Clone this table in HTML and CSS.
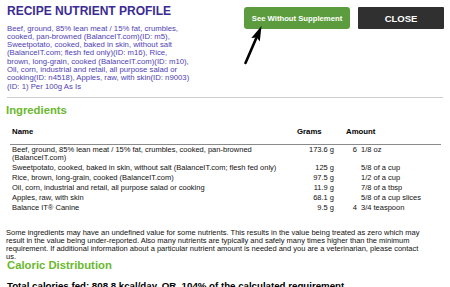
FILE: index.html
```html
<!DOCTYPE html>
<html lang="en">
<head>
<meta charset="utf-8">
<title>Recipe Nutrient Profile</title>
<link rel="stylesheet" href="styles.css">
</head>
<body>
<header class="top">
  <div class="intro">
    <h1 class="title">RECIPE NUTRIENT PROFILE</h1>
    <p class="recipe">Beef, ground, 85% lean meat / 15% fat, crumbles,<br>cooked, pan-browned (BalanceIT.com)(ID: m5),<br>Sweetpotato, cooked, baked in skin, without salt<br>(BalanceIT.com; flesh fed only)(ID: m16), Rice,<br>brown, long-grain, cooked (BalanceIT.com)(ID: m10),<br>Oil, corn, industrial and retail, all purpose salad or<br>cooking(ID: n4518), Apples, raw, with skin(ID: n9003)<br>(ID: 1) Per 100g As Is</p>
  </div>
  <div class="actions">
    <button class="btn btn-green" type="button">See Without Supplement</button>
    <button class="btn btn-dark" type="button">CLOSE</button>
  </div>
</header>
<hr class="rule">
<h2 class="section">Ingredients</h2>
<table class="ing">
  <colgroup><col class="c-name"><col class="c-grams"><col class="c-amt"></colgroup>
  <thead>
    <tr><th class="name">Name</th><th class="grams">Grams</th><th class="amt">Amount</th></tr>
  </thead>
  <tbody>
    <tr><td class="name">Beef, ground, 85% lean meat / 15% fat, crumbles, cooked, pan-browned (BalanceIT.com)</td><td class="grams">173.6 g</td><td class="amt"><span class="whole">6</span><span class="frac">1/8 oz</span></td></tr>
    <tr><td class="name">Sweetpotato, cooked, baked in skin, without salt (BalanceIT.com; flesh fed only)</td><td class="grams">125 g</td><td class="amt"><span class="whole"></span><span class="frac">5/8 of a cup</span></td></tr>
    <tr><td class="name">Rice, brown, long-grain, cooked (BalanceIT.com)</td><td class="grams">97.5 g</td><td class="amt"><span class="whole"></span><span class="frac">1/2 of a cup</span></td></tr>
    <tr><td class="name">Oil, corn, industrial and retail, all purpose salad or cooking</td><td class="grams">11.9 g</td><td class="amt"><span class="whole"></span><span class="frac">7/8 of a tbsp</span></td></tr>
    <tr><td class="name">Apples, raw, with skin</td><td class="grams">68.1 g</td><td class="amt"><span class="whole"></span><span class="frac">5/8 of a cup slices</span></td></tr>
    <tr><td class="name">Balance IT® Canine</td><td class="grams">9.5 g</td><td class="amt"><span class="whole">4</span><span class="frac">3/4 teaspoon</span></td></tr>
  </tbody>
</table>
<p class="note">Some ingredients may have an undefined value for some nutrients. This results in the value being treated as zero which may<br>result in the value being under-reported. Also many nutrients are typically and safely many times higher than the minimum<br>requirement. If additional information about a particular nutrient amount is needed and you are a veterinarian, please contact<br>us.</p>
<h2 class="section">Caloric Distribution</h2>
<p class="total">Total calories fed: 808.8 kcal/day, OR, 104% of the calculated requirement</p>
<svg class="arrow" width="28" height="46" viewBox="0 0 28 46" aria-hidden="true">
  <line x1="5.5" y1="41" x2="16.2" y2="16.3" stroke="#000" stroke-width="2.6" stroke-linecap="round"/>
  <polygon points="21.5,4 19.8,19.6 16.7,15.6 11.3,16" fill="#000"/>
</svg>
</body>
</html>
```
FILE: styles.css
```css
* { box-sizing: border-box; }
html, body { margin: 0; padding: 0; background: #fff; }
body {
  width: 450px;
  height: 287px;
  overflow: hidden;
  position: relative;
  font-family: "Liberation Sans", Arial, Helvetica, sans-serif;
  color: #000;
}
.top {
  display: flex;
  justify-content: space-between;
  align-items: flex-start;
  padding: 0 6px 0 7px;
}
.intro { width: 230px; }
.title {
  margin: 4px 0 0;
  font-size: 12px;
  line-height: 14px;
  font-weight: bold;
  color: #3b2b92;
  white-space: nowrap;
}
.recipe {
  margin: 6.5px 0 0;
  font-size: 7.75px;
  line-height: 8.3px;
  color: #4f3fb3;
  white-space: nowrap;
}
.actions {
  display: flex;
  gap: 8px;
  margin-top: 7px;
}
.btn {
  height: 22px;
  border: 0;
  padding: 0;
  color: #fff;
  font-family: inherit;
  font-weight: bold;
  cursor: pointer;
}
.btn-green {
  width: 106px;
  background: #5c9c3e;
  border-radius: 3px;
  font-size: 7.7px;
}
.btn-dark {
  width: 86px;
  background: #303030;
  border-radius: 1px;
  font-size: 9.5px;
}
.rule {
  margin: 6px 7px 0;
  border: 0;
  border-top: 1px solid #cfcfcf;
  height: 0;
}
.section {
  margin: 7.5px 0 0 6px;
  font-size: 11.3px;
  line-height: 11.5px;
  font-weight: bold;
  color: #6ab82e;
}
.ing {
  margin: 6.5px 0 0 10px;
  width: 431px;
  border-collapse: collapse;
  table-layout: fixed;
  font-size: 7.5px;
}
.c-name { width: 283px; }
.c-grams { width: 45px; }
.c-amt { width: 103px; }
.ing th {
  font-size: 7.8px;
  line-height: 9px;
  font-weight: bold;
  text-align: left;
  padding: 4px 0 7.4px;
  border-bottom: 1px solid #8a8a8a;
}
.ing th.name { padding-left: 2px; }
.ing th.grams { padding-left: 4px; }
.ing th.amt { padding-left: 8px; }
.ing td {
  line-height: 8px;
  padding: 1px 0;
  vertical-align: top;
  color: #111;
}
.ing td.name { padding-left: 2px; }
.ing td.grams { text-align: right; padding-right: 4px; }
.ing td.amt { padding-left: 8px; white-space: nowrap; }
.whole {
  display: inline-block;
  width: 11px;
  text-align: right;
}
.frac { margin-left: 4px; }
.note {
  margin: 16.5px 0 0 6px;
  font-size: 7.5px;
  line-height: 7.8px;
  color: #111;
  white-space: nowrap;
}
.note + .section { margin-top: 0; margin-left: 7px; }
.total {
  margin: 8px 0 0 7px;
  font-size: 9.7px;
  line-height: 12px;
  font-weight: bold;
  white-space: nowrap;
}
.arrow {
  position: absolute;
  left: 240px;
  top: 22px;
  pointer-events: none;
}
```
